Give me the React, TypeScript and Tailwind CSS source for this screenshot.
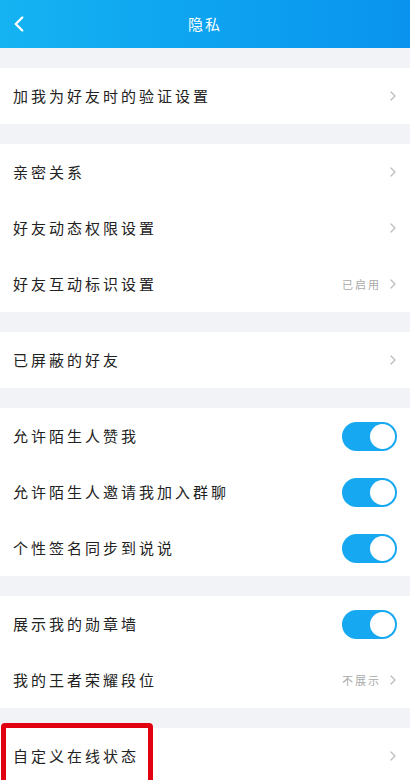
import { ChevronLeft, ChevronRight } from 'lucide-react';

type Row = { label: string; kind: 'link' | 'toggle'; value?: string };

const SECTIONS: Row[][] = [
  [{ label: '加我为好友时的验证设置', kind: 'link' }],
  [
    { label: '亲密关系', kind: 'link' },
    { label: '好友动态权限设置', kind: 'link' },
    { label: '好友互动标识设置', kind: 'link', value: '已启用' },
  ],
  [{ label: '已屏蔽的好友', kind: 'link' }],
  [
    { label: '允许陌生人赞我', kind: 'toggle' },
    { label: '允许陌生人邀请我加入群聊', kind: 'toggle' },
    { label: '个性签名同步到说说', kind: 'toggle' },
  ],
  [
    { label: '展示我的勋章墙', kind: 'toggle' },
    { label: '我的王者荣耀段位', kind: 'link', value: '不展示' },
  ],
];

function Toggle() {
  return (
    <div className="w-[55px] h-[29px] rounded-full bg-[#16a8f0] flex items-center justify-end pr-[2px]">
      <div className="w-[25px] h-[25px] rounded-full bg-white" />
    </div>
  );
}

function SettingRow({ row }: { row: Row }) {
  return (
    <div className="h-[56px] flex items-center justify-between pl-[13px] pr-[13px]">
      <span className="text-[15px] tracking-[3px] text-[#222]">{row.label}</span>
      {row.kind === 'toggle' ? (
        <Toggle />
      ) : (
        <div className="flex items-center gap-[4px]">
          {row.value && <span className="text-[11px] tracking-[2px] text-[#aaa]">{row.value}</span>}
          <ChevronRight size={16} strokeWidth={1.8} className="text-[#bbb] -mr-[4px]" />
        </div>
      )}
    </div>
  );
}

export default function App() {
  return (
    <div
      className="w-[410px] h-[780px] overflow-hidden bg-[#f2f3f7]"
      style={{ fontFamily: '"Noto Sans CJK SC", "Noto Sans", sans-serif' }}
    >
      {/* header */}
      <div className="h-[48px] bg-gradient-to-r from-[#15b3f2] to-[#0a93ee] flex items-center relative">
        <ChevronLeft size={26} strokeWidth={2.2} className="text-white ml-[6px]" />
        <span className="absolute left-1/2 -translate-x-1/2 text-white text-[15px] tracking-[2px]">隐私</span>
      </div>

      <div className="flex flex-col gap-[20px] pt-[20px]">
        {SECTIONS.map((rows, i) => (
          <div key={i} className="bg-white">
            {rows.map(r => <SettingRow key={r.label} row={r} />)}
          </div>
        ))}

        {/* last section with highlight */}
        <div className="bg-white relative">
          <SettingRow row={{ label: '自定义在线状态', kind: 'link' }} />
          <div className="absolute left-[1px] top-[-5px] w-[152px] h-[80px] border-[5px] border-[#e0000f] rounded-[4px]" />
        </div>
      </div>
    </div>
  );
}
